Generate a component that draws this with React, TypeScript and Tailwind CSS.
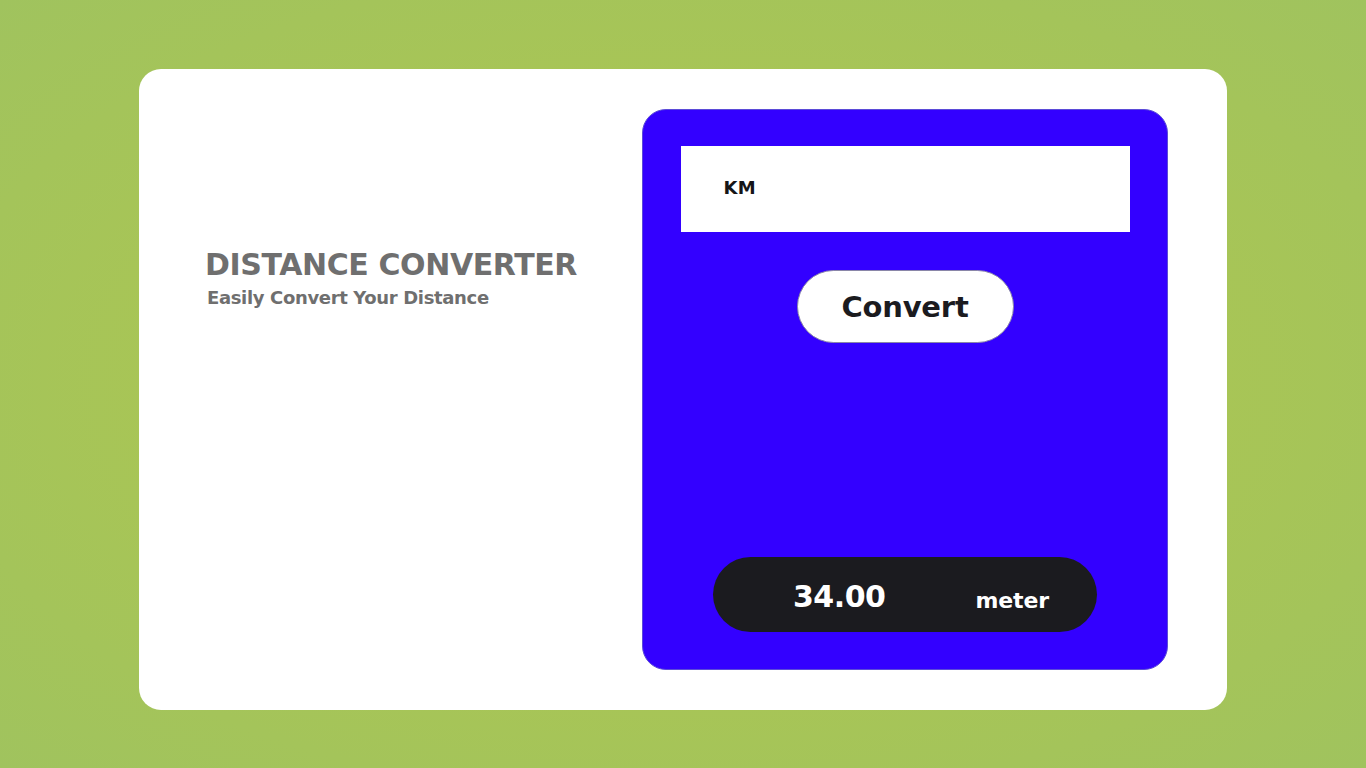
export default function App() {
  return (
    <div
      className="flex h-[768px] w-full items-center justify-center bg-[radial-gradient(ellipse_at_center,#b3c54c_0%,#a8c556_55%,#a0c35e_100%)] pt-[11px]"
      style={{ fontFamily: '"DejaVu Sans", "Open Sans", sans-serif' }}
    >
      <div className="flex h-[641px] w-[1088px] items-center rounded-[22px] bg-white pl-[66px] pr-[59px]">
        {/* Title */}
        <div className="mb-[222px] flex w-[437px] flex-col">
          <h1 className="text-[30px] leading-none font-bold tracking-[-0.4px] text-[#6f6f6f]">
            DISTANCE CONVERTER
          </h1>
          <p className="mt-[9px] pl-[2px] text-[18px] leading-none font-bold tracking-[-0.35px] text-[#6f6f6f]">
            Easily Convert Your Distance
          </p>
        </div>

        {/* Converter panel */}
        <div className="flex h-[561px] w-[526px] flex-col items-center rounded-[24px] border border-[#5b4bd8] bg-[#3300ff] pt-[36px]">
          <div className="flex h-[86px] w-[449px] items-center bg-white pb-[3px] pl-[43px]">
            <span className="text-[18px] font-bold tracking-[0.2px] text-[#151518]">KM</span>
          </div>

          <button className="mt-[38px] flex h-[73px] w-[217px] items-center justify-center rounded-full border border-[#8a86a8] bg-white pt-[2px] text-[29px] font-semibold tracking-[-0.2px] text-[#1b1b1f]">
            Convert
          </button>

          <div className="mt-auto mb-[37px] flex h-[75px] w-[384px] items-center rounded-full bg-[#1b1b1f] pt-[4px] pl-[80px] text-white">
            <span className="text-[30px] font-bold tracking-[-0.5px]">34.00</span>
            <span className="ml-[90px] mt-[7px] text-[22px] font-bold tracking-[-0.1px]">meter</span>
          </div>
        </div>
      </div>
    </div>
  );
}
